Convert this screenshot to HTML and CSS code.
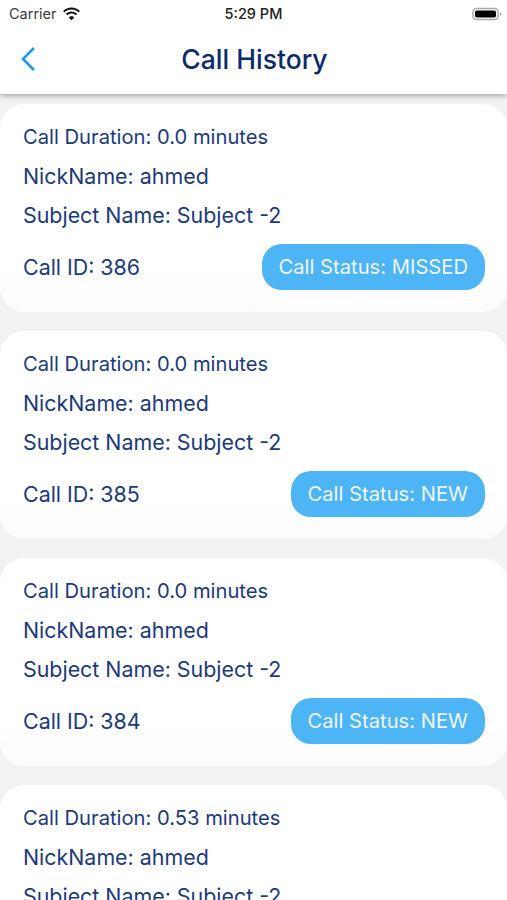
FILE: index.html
```html
<!DOCTYPE html>
<html lang="en">
<head>
<meta charset="utf-8">
<title>Call History</title>
<link rel="stylesheet" href="styles.css">
</head>
<body>
<div class="phone">
  <header class="top">
    <div class="status">
      <div class="status-left">
        <span>Carrier</span>
        <svg class="wifi" width="19" height="14" viewBox="0 0 19 14"><path d="M9.5 2.6c2.7 0 5.2 1 7.1 2.8l1.3-1.4C15.7 1.8 12.7.5 9.5.5S3.300 1.800 1.100 4l1.300 1.400C4.300 3.600 6.800 2.600 9.500 2.600z"/><path d="M9.500 6.500c1.600 0 3.100.6 4.300 1.700l1.400-1.400C13.700 5.300 11.700 4.400 9.500 4.400s-4.200.9-5.700 2.400l1.400 1.400c1.200-1.100 2.700-1.700 4.300-1.700z"/><path d="M9.500 13.300l2.800-2.900c-.7-.7-1.700-1.200-2.800-1.200s-2.100.5-2.800 1.200z"/></svg>
      </div>
      <span class="time">5:29 PM</span>
      <svg class="battery" width="30" height="14" viewBox="0 0 30 14"><rect x="1" y="1.500" width="25" height="11" rx="3.500" fill="none" stroke="#a9a9a9" stroke-width="1.500"/><rect x="3" y="3.500" width="21" height="7" rx="1.800" fill="#000"/><path d="M28 5.200c.9.300 1.300 1 1.300 1.800s-.4 1.500-1.300 1.800z" fill="#a9a9a9"/></svg>
    </div>
    <div class="nav">
      <svg class="back" width="16" height="26" viewBox="0 0 16 26"><path d="M14 2 3 13l11 11" fill="none" stroke="#1e9be8" stroke-width="2.600"/></svg>
      <h1>Call History</h1>
    </div>
  </header>
  <main class="list">
    <article class="card">
      <p class="small">Call Duration: 0.0 minutes</p>
      <p>NickName: ahmed</p>
      <p>Subject Name: Subject -2</p>
      <div class="row"><span>Call ID: 386</span><span class="pill">Call Status: MISSED</span></div>
    </article>
    <article class="card">
      <p class="small">Call Duration: 0.0 minutes</p>
      <p>NickName: ahmed</p>
      <p>Subject Name: Subject -2</p>
      <div class="row"><span>Call ID: 385</span><span class="pill">Call Status: NEW</span></div>
    </article>
    <article class="card">
      <p class="small">Call Duration: 0.0 minutes</p>
      <p>NickName: ahmed</p>
      <p>Subject Name: Subject -2</p>
      <div class="row"><span>Call ID: 384</span><span class="pill">Call Status: NEW</span></div>
    </article>
    <article class="card">
      <p class="small">Call Duration: 0.53 minutes</p>
      <p>NickName: ahmed</p>
      <p>Subject Name: Subject -2</p>
    </article>
  </main>
</div>
</body>
</html>
```
FILE: styles.css
```css
html, body {
  margin: 0;
  padding: 0;
  height: 100%;
  overflow: hidden;
}
body {
  background: #f2f2f3;
  font-family: Inter, "Liberation Sans", sans-serif;
}
.phone {
  height: 900px;
  overflow: hidden;
  display: flex;
  flex-direction: column;
}
.top {
  height: 94px;
  flex: none;
  background: #fff;
  box-shadow: 0 1px 6px rgba(0, 0, 0, 0.4);
  position: relative;
  z-index: 1;
}
.status {
  height: 27px;
  padding: 0 5px 0 9px;
  display: flex;
  align-items: center;
  justify-content: space-between;
  font-size: 14.500px;
  color: #3a3a3c;
  position: relative;
}
.status-left {
  display: flex;
  align-items: center;
  gap: 5px;
}
.wifi { fill: #111; }
.time {
  position: absolute;
  left: 0;
  right: 0;
  text-align: center;
  font-weight: 500;
  color: #222;
}
.nav {
  height: 64px;
  display: flex;
  align-items: center;
  justify-content: center;
  position: relative;
}
.back {
  position: absolute;
  left: 20px;
  top: 19px;
}
h1 {
  margin: 0;
  padding-left: 2px;
  font-size: 26.500px;
  line-height: 36px;
  font-weight: 500;
  color: #0b2a6b;
}
.list {
  padding-top: 10px;
  display: flex;
  flex-direction: column;
  gap: 19px;
}
.card {
  height: 208px;
  flex: none;
  box-sizing: border-box;
  padding: 20px 22px 0 23px;
  background: linear-gradient(#fff 75%, #fcfcfd);
  border-radius: 24px;
  color: #1d3a78;
  font-size: 21.400px;
}
.card p {
  margin: 0 0 14px;
  line-height: 25px;
}
.card p.small {
  font-size: 20.200px;
  margin-bottom: 15px;
}
.row {
  display: flex;
  align-items: center;
  justify-content: space-between;
  margin-top: 16px;
}
.pill {
  height: 46px;
  line-height: 46px;
  padding: 0 17px;
  border-radius: 20px;
  background: #4db5f5;
  color: #eef8ff;
  font-size: 20.200px;
}
```
